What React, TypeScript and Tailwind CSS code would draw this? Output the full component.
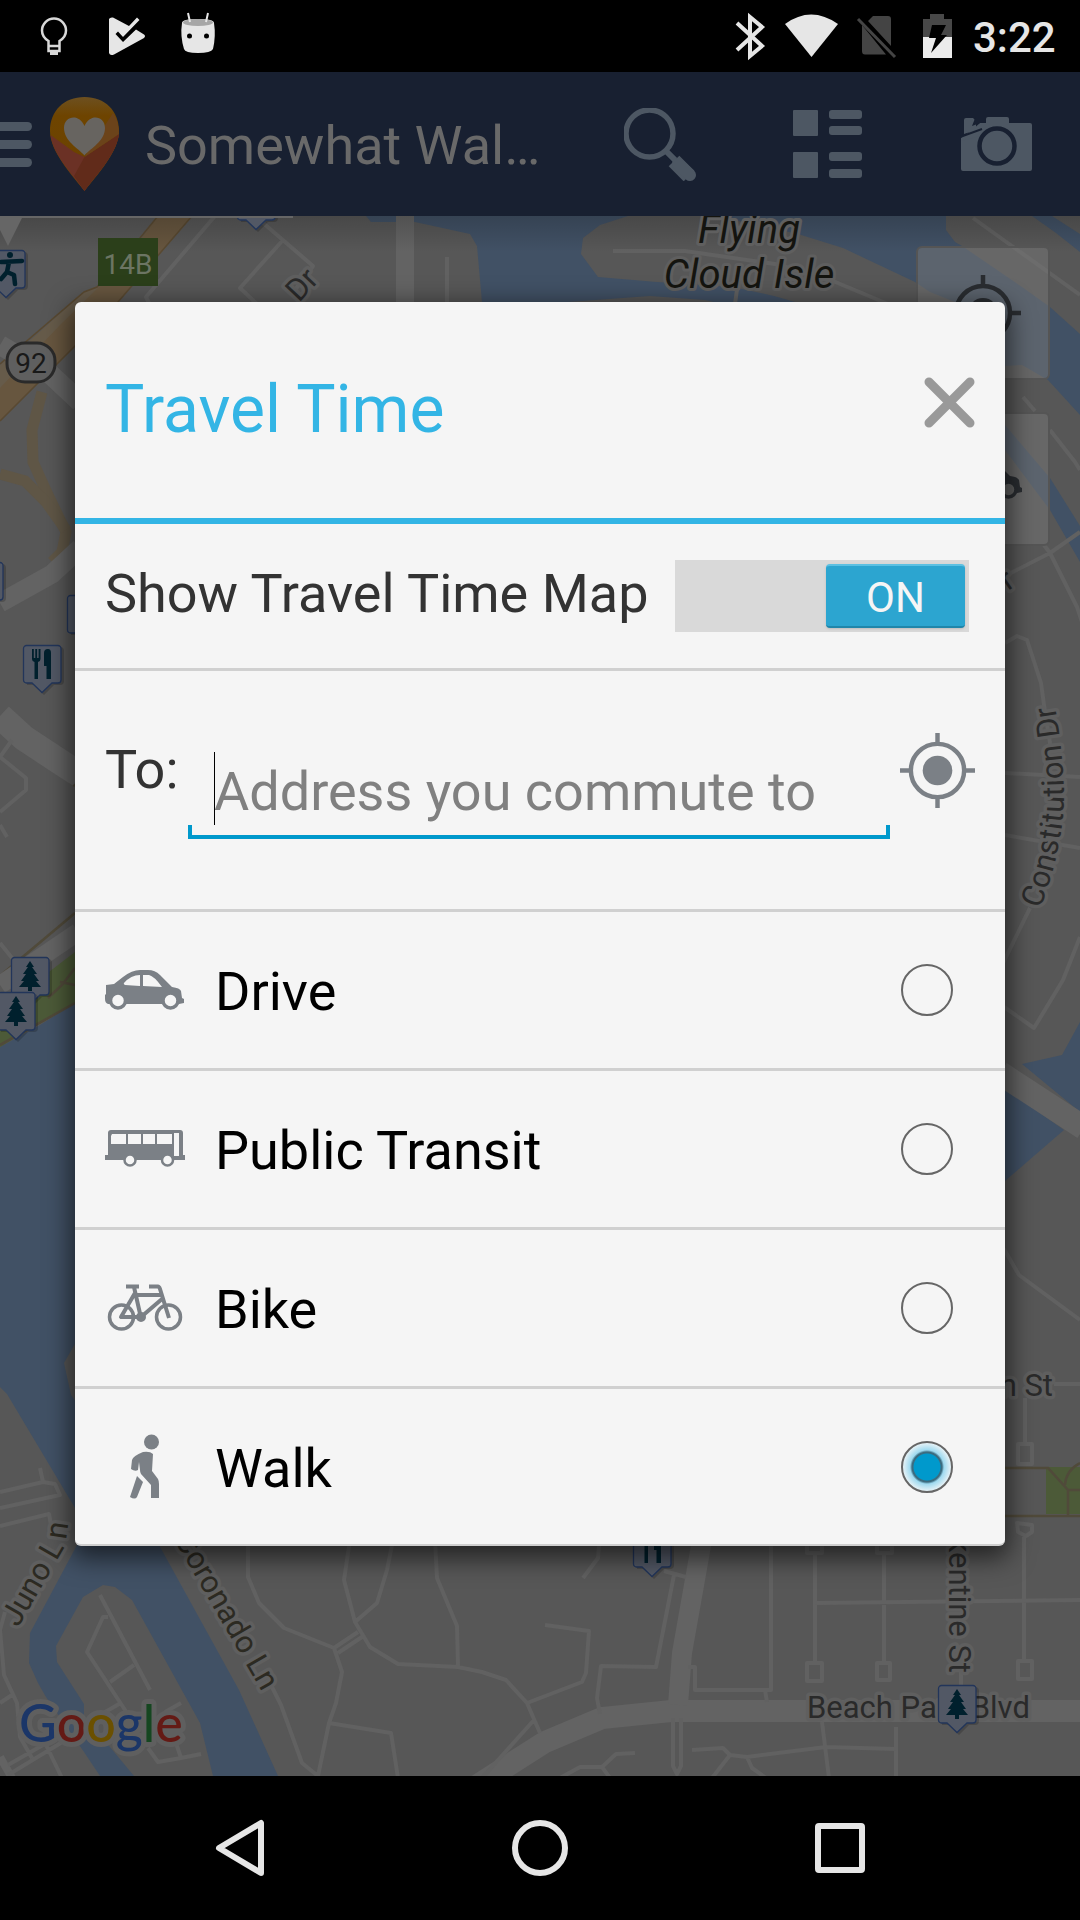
import { useState, type ReactNode } from "react";

const sans = "font-['Roboto','Noto_Sans',sans-serif]";

/* ---------- Map ---------- */

type PinKind = "tree" | "food" | "run" | "none";

function Pin({ x, y, kind }: { x: number; y: number; kind: PinKind }) {
  return (
    <g transform={`translate(${x} ${y})`}>
      <path d="M4 2H37a4 4 0 0 1 4 4V36a4 4 0 0 1-4 4H31L21 50 11 40H4Z" fill="#000" opacity=".18" />
      <path
        d="M3.500 .5H35a3 3 0 0 1 3 3V35a3 3 0 0 1-3 3H29L19 47.500 9 38H3.500a3 3 0 0 1-3-3V3.500a3 3 0 0 1 3-3Z"
        fill="#525865"
        stroke="#22355a"
        strokeWidth="1.300"
      />
      {kind === "tree" && (
        <path d="M19 4l4 6h-2l5 7h-3l5 7h-3l5 6H21v4h-4v-4H8l5-6h-3l5-7h-3l5-7h-2Z" fill="#00202d" />
      )}
      {kind === "food" && (
        <g fill="#00202d">
          <path d="M9 4h1.800v9h1.500V4h1.800v9h1.500V4H17.500v10q0 2.500-2.500 3V34h-3.500V17Q9 16.500 9 14Z" />
          <path d="M21 21V8q0-4 4-4 3 0 3 4V34h-4.500V21Z" />
        </g>
      )}
      {kind === "run" && (
        <g stroke="#00202d" strokeWidth="4.500" fill="none" strokeLinecap="round" strokeLinejoin="round">
          <circle cx="23" cy="5" r="3" fill="#00202d" stroke="none" />
          <path d="M35 11L14 12 M22 12L20 22 27 25 28 34 M20 22L14 29" />
        </g>
      )}
    </g>
  );
}

const thinRoads =
  "M215 216L146 297 150 305 M262 222L313 266 295 290 M283 240L240 288 258 305 M447 257V304 M613 251H685L775 264 833 281 888 304 M735 304L738 282" +
  " M973 218L1080 295 M1023 397L1035 411 M1050 430L1075 462 1080 470 M1080 532L1050 553 1005 576 M1044 545L1050 553 1077 607 1082 622" +
  " M1005 643L1017 636 1027 640 1041 683 1045 712 1050 743 1044 775 M1005 773L1080 777 M1005 835L1080 848 M1030 908L1003 963" +
  " M1080 937L1063 980 1034 1028 1004 1007 M1004 1249L1019 1275 1080 1320 M1004 1384H1012 M1054 1384H1080 M1025 1398V1444H1032V1464H1018V1444H1025" +
  " M1017 1523L1032 1525V1532L1026 1536 1018 1532Z M1024 1537V1661H1018V1679H1032V1661H1024 M815 1603L1080 1600 M815 1553V1663 M884 1553V1663" +
  " M807 1663H822V1681H807Z M877 1663H890V1680H877Z M807 1540H822V1553H807Z M877 1540H892V1553H877Z M771 1545V1690H695V1667H688 M765 1690L767 1702 M961 1672V1690" +
  " M664 1571L686 1577 M674 1575L656 1667 601 1666 597 1698 600 1714 M545 1625L589 1631 586 1673 582 1682 527 1703 M599 1545L598 1558 583 1578" +
  " M673 1718V1766L677 1774 681 1766V1718 M692 1750L723 1748 730 1755 747 1757 826 1747 896 1749 M730 1755L712 1778 M747 1757L752 1768 766 1778" +
  " M822 1722L829 1778 M896 1727V1778 M635 1753L616 1754 602 1767H580L560 1778 M602 1767L610 1778" +
  " M12 740L0 757 26 778V790L0 812 M0 825L7 837 M0 943L12 958 M0 1492L43 1482 55 1484 60 1495 0 1508 M40 1468L43 1482 M0 1526L49 1514 52 1530" +
  " M5 1612L0 1630 4 1675 17 1703 20 1737 32 1758 M0 1703L12 1695 M8 1775L64 1741 M8 1765L50 1741 M46 1745L62 1778" +
  " M100 1595L150 1690 M108 1617H103L87 1652 127 1713 M134 1665L110 1682 M119 1704L100 1715 M148 1748L158 1762 181 1758 201 1754 M176 1743L181 1758 M181 1703L165 1712" +
  " M248 1540V1577L259 1603 284 1628 334 1648 342 1672 336 1703 329 1723 318 1776 302 1763 281 1705 272 1687" +
  " M350 1540L344 1580 355 1622 370 1647 398 1664 458 1667 482 1672 506 1680 527 1703 540 1733 M355 1622L377 1603 387 1570 393 1540 M435 1540L437 1578 457 1626 458 1667 M334 1648L358 1632 M338 1653L362 1637" +
  " M329 1723L391 1733 398 1778 M534 1720L482 1778 M527 1703L540 1698";

const halo = { stroke: "#5f5f5f", strokeWidth: 7, paintOrder: "stroke", strokeLinejoin: "round" } as const;

function CityMap() {
  return (
    <svg
      className={`absolute inset-0 size-full ${sans}`}
      viewBox="0 216 1080 1560"
      preserveAspectRatio="xMidYMid slice"
      aria-label="Map"
    >
      <defs>
        <path id="constitution" d="M1040 909Q1062 852 1064 800 1064 750 1052 690" />
        <linearGradient id="barShadow" x1="0" y1="0" x2="0" y2="1">
          <stop offset="0" stopColor="#000" stopOpacity=".18" />
          <stop offset="1" stopColor="#000" stopOpacity="0" />
        </linearGradient>
      </defs>
      <rect x="0" y="216" width="1080" height="1560" fill="#575757" />

      {/* water */}
      <g fill="#415165">
        <path d="M366 216L371 222H415L470 234 477 246 482 302V366H1005L1022 365 1048 380 1080 415V216Z" />
        <path d="M1005 425L1050 478 1080 526V562L1050 510 1005 450Z" />
        <path d="M1022 1064L1062 1055 1080 1022V1112Z M1005 1088L1064 1130 1005 1181Z" />
        <path d="M0 1047L40 1025 75 1003H160L159 1545 239 1690 278 1776H213L200 1723 132 1600 115 1587 103 1585 83 1597 56 1646 57 1662 84 1704V1715L100 1735 134 1776H100L84 1752 46 1697 38 1683 29 1663 30 1633 77 1545 75 1508 7 1394 0 1387Z" />
      </g>
      {/* islands and shore */}
      <g fill="#575757">
        <path d="M628 216L600 225 583 238 581 254 598 277 657 282 733 287 774 296 802 304H960L930 292 915 282 843 248 798 234 716 216Z" />
        <path d="M554 303L650 296 705 300 722 304Z" />
        <path d="M946 216V230L955 242 962 246 1022 287 1050 307 1080 334V252L1056 233 1032 216Z M1052 216L1080 234V216Z" />
        <path d="M64 1363L76 1342V1402L71 1395Z" />
      </g>
      {/* parks */}
      <path d="M75 952L45 975 0 1023V1047L75 1003Z M1046 1467H1080V1514H1046Z" fill="#4c5a38" />
      <g fill="none" stroke="#504a3a" strokeWidth="2.500">
        <path d="M0 1045L75 1003 M0 976L75 913 M0 730L75 786 M75 968L62 985 48 998 M60 982L75 985" />
        <path d="M1004 1468H1048L1068 1490V1516 M1068 1490H1080 M1065 1485Q1066 1470 1080 1463 M1004 1516H1080" />
      </g>

      {/* highway */}
      <path d="M158 216H192L118 302 76 345 0 421V378L25 350 84 292 100 286 140 240Z" fill="#67563f" />
      <path d="M84 292L100 286 60 325 0 388V365L25 345Z" fill="#665b4a" />
      <path d="M158 216L140 238 97 287 84 292 0 364 M192 216L118 302 76 345 0 421" fill="none" stroke="#594931" strokeWidth="1.500" />
      <g fill="none" stroke="#5f5646" strokeWidth="11">
        <path d="M42 392L32 430 33 462 48 495 66 532 62 552 52 562" />
        <path d="M0 474L25 481 46 502 66 530" />
      </g>

      {/* wide roads */}
      <g fill="none" stroke="#636363">
        <path d="M405 216V304" strokeWidth="18" />
        <path d="M0 345L22 358 M48 372L80 402" strokeWidth="20" />
        <path d="M0 603L52 574 80 548" strokeWidth="19" />
        <path d="M0 716L24 738 80 775" strokeWidth="26" />
        <path d="M0 985L78 932" strokeWidth="18" />
        <path d="M1000 1073L1084 1128" strokeWidth="24" />
        <path d="M470 1790L545 1742 602 1718 671 1711H1080" strokeWidth="22" />
        <path d="M702 1540L682 1653 678 1705" strokeWidth="20" />
        <path d="M0 1757L12 1778" strokeWidth="8" />
      </g>
      <path d={thinRoads} fill="none" stroke="#616161" strokeWidth="4" strokeLinejoin="round" />

      <rect x="0" y="216" width="1080" height="36" fill="url(#barShadow)" />

      {/* info window edge */}
      <Pin x={237} y={182} kind="none" />
      <Pin x={-13} y={250} kind="run" />
      <path d="M0 216H293V218H22L8 246 0 230Z" fill="#666" />

      {/* road shields */}
      <rect x="98" y="238" width="60" height="48" fill="#2b3f1a" />
      <text x="128" y="274" fontSize="28" textAnchor="middle" fill="#6c7563">14B</text>
      <rect x="7" y="343" width="48" height="39" rx="18" fill="#5f5f5f" stroke="#2a2a2a" strokeWidth="3" />
      <text x="31" y="373" fontSize="28" textAnchor="middle" fill="#191919">92</text>

      {/* labels */}
      <g fontSize="31" fill="#2a2a2a" {...halo}>
        <text transform="translate(299 303) rotate(-47)">Dr</text>
        <text transform="translate(1008 591) rotate(-35)">r</text>
        <text x="1053" y="1396" textAnchor="end">n St</text>
        <text><textPath href="#constitution">Constitution Dr</textPath></text>
        <text transform="translate(949 1673) rotate(90)" textAnchor="end">kentine St</text>
        <text x="807" y="1718">Beach Park Blvd</text>
        <g fill="#2c2a22">
          <text transform="translate(18 1628) rotate(-60)">Juno L</text>
          <text transform="translate(66 1540) rotate(-82)">n</text>
          <text transform="translate(262 1692) rotate(60)" textAnchor="end">Coronado Ln</text>
        </g>
      </g>
      <g fontSize="40" fontStyle="italic" textAnchor="middle" fill="#14140f" {...halo} strokeWidth={6}>
        <text x="749" y="243">Flying</text>
        <text x="749" y="288">Cloud Isle</text>
      </g>

      <Pin x={-35} y={562} kind="none" />
      <Pin x={67} y={595} kind="food" />
      <Pin x={23} y={645} kind="food" />
      <Pin x={11} y={957} kind="tree" />
      <Pin x={-3} y={992} kind="tree" />
      <Pin x={633} y={1529} kind="food" />
      <Pin x={938} y={1685} kind="tree" />

      <text x="19" y="1742" fontSize="52" fontWeight="500" className="font-['Lato',sans-serif]" {...halo} strokeWidth={10}>
        <tspan fill="#1b3668">G</tspan>
        <tspan fill="#641a15">o</tspan>
        <tspan fill="#6b5000">o</tspan>
        <tspan fill="#1b3668">g</tspan>
        <tspan fill="#154620">l</tspan>
        <tspan fill="#641a15">e</tspan>
      </text>
    </svg>
  );
}

/* ---------- Shared icons ---------- */

function Crosshair({ className }: { className: string }) {
  return (
    <svg viewBox="0 0 76 76" className={className} fill="none" stroke="currentColor" aria-hidden="true">
      <circle cx="38" cy="38" r="27" strokeWidth="4.500" />
      <circle cx="38" cy="38" r="15" fill="currentColor" stroke="none" />
      <path d="M38 0V11 M38 65V76 M0 38H11 M65 38H76" strokeWidth="4.500" />
    </svg>
  );
}

function CarIcon({ className, hole }: { className: string; hole: string }) {
  return (
    <svg viewBox="105 951 80 78" className={className} aria-hidden="true">
      <path
        d="M105 995L106 994V985L114 984 123 977Q132 970 140 970H148Q155 970 160 975L172 987Q180 988 181 991L182 998 184 999V1003L179 1004H108Q105 1003 105 999Z"
        fill="currentColor"
      />
      <g fill={hole}>
        <path d="M124 983Q131 975 140 975V986L125 985Q123 984 124 983Z M143 975H149Q154 976 162 987L143 986Z" />
      </g>
      <g fill={hole} stroke="currentColor" strokeWidth="3.500">
        <circle cx="118" cy="1000.500" r="7.500" />
        <circle cx="170.500" cy="1000.500" r="7.500" />
      </g>
    </svg>
  );
}

function BusIcon() {
  return (
    <svg viewBox="105 1110 80 78" className="w-20 shrink-0" aria-hidden="true">
      <path d="M108 1155V1133Q108 1130 111 1130H180Q183 1130 183 1133V1155H185V1160H105V1155Z" fill="currentColor" />
      <path d="M112 1134H126V1144H111V1136Z M128 1134H141V1144H128Z M143 1134H155V1144H143Z M157 1134H172V1144H157Z M174 1133H179V1156H174Z" fill="#f5f5f5" />
      <g fill="#f5f5f5" stroke="currentColor" strokeWidth="2.500">
        <circle cx="130" cy="1160" r="5.500" />
        <circle cx="167.500" cy="1160" r="5.500" />
      </g>
    </svg>
  );
}

function BikeIcon() {
  return (
    <svg viewBox="105 1269 80 78" className="w-20 shrink-0" fill="none" stroke="currentColor" strokeWidth="4" aria-hidden="true">
      <circle cx="121.500" cy="1317" r="12" strokeWidth="3.500" />
      <circle cx="168.500" cy="1317" r="12" strokeWidth="3.500" />
      <path d="M126 1286.500H139 M134 1287L141 1318 M135 1293L121 1317H141L162 1299 M134 1295H161 M149 1286.500H158Q159 1286.500 160 1289L169 1318" strokeLinejoin="round" />
      <circle cx="141" cy="1317" r="3" fill="currentColor" />
    </svg>
  );
}

function WalkIcon() {
  return (
    <svg viewBox="105 1428 80 78" className="w-20 shrink-0" fill="currentColor" aria-hidden="true">
      <circle cx="151.500" cy="1442" r="7.500" />
      <path d="M143 1452Q150 1451 153 1454L152 1471 158 1479Q159 1481 159 1484V1498H151V1485L141 1474Q140 1472 140 1470L139 1462 138 1470Q135 1472 131 1469L132 1460Q133 1456 143 1452Z" />
      <path d="M137 1476L143 1482 137 1497Q135 1500 130 1497Z" />
    </svg>
  );
}

/* ---------- Bars ---------- */

function StatusBar() {
  return (
    <div className="flex h-[72px] items-center bg-black pl-[18px] pr-6">
      <svg viewBox="18 0 216 72" className="w-[216px]" aria-hidden="true">
        <g fill="none" stroke="#d8d8d8" strokeWidth="2.500">
          <path d="M48.500 46V41Q42 37 42 30.500A12 12 0 0 1 66 30.500Q66 37 59.500 41V51H48.500Z M48.500 46H59.500" />
          <path d="M50 53.500H58" strokeWidth="3" />
        </g>
        <path d="M109 19Q110 17 113 17.500L129 26 137 17.500 139.500 20 123 37 118 31.500 115.500 34 123 42 136 29.500 144 34.500Q146 36 144 38L114 54.500Q110 56 109 53Z" fill="#e6e6e6" />
        <path d="M182 23Q182 19 198 19T214 23Q216 36 213 49Q211 53 198 53T184 49Q180 36 182 23Z" fill="#e6e6e6" />
        <ellipse cx="198" cy="22.500" rx="15" ry="3.500" fill="#a6a6a6" />
        <path d="M188 13L190 22 M208 13L206 22" stroke="#e6e6e6" strokeWidth="2" />
        <circle cx="189.500" cy="36" r="2.500" />
        <circle cx="206.500" cy="36" r="2.500" />
      </svg>
      <svg viewBox="714 0 256 72" className="ml-auto w-64" aria-hidden="true">
        <path d="M737 23L762 46 750 56V17L762 27 737 50" fill="none" stroke="#e6e6e6" strokeWidth="4" />
        <path d="M785 24Q811 5 838 24L811.500 57Z" fill="#e6e6e6" />
        <path d="M868 21L873 16H888Q891 16 891 19V46Z M862 25L886 54.500H865Q862 54.500 862 51Z" fill="#444" />
        <path d="M858 19L895 57" stroke="#444" strokeWidth="3" />
        <path d="M923 19H930V14H944V19H952V37H923Z" fill="#484848" />
        <path d="M923 37H952V58H923Z" fill="#ebebeb" />
        <path d="M932 25H946L941 35H947L931 53 936 38H929Z" fill="#000" />
      </svg>
      <span className="ml-[3px] w-[83px] pt-[3px] text-[42px] font-medium leading-none text-[#e6e6e6]">3:22</span>
    </div>
  );
}

function AppBar() {
  const action = "flex h-full w-[168px] shrink-0 items-center justify-center";
  return (
    <header className="flex h-36 items-center bg-[#182031] text-[#4d5763]">
      <button aria-label="Open menu" className="flex w-8 shrink-0 flex-col gap-[9px]">
        <span className="h-[9px] rounded-r-full bg-current" />
        <span className="h-[9px] rounded-r-full bg-current" />
        <span className="h-[9px] rounded-r-full bg-current" />
      </button>
      <svg viewBox="50 97 69 94" className="ml-[18px] w-[69px] shrink-0" aria-hidden="true">
        <defs>
          <linearGradient id="pinTop" x1="0" y1="0" x2="0" y2="1">
            <stop offset="0" stopColor="#6d5020" />
            <stop offset=".2" stopColor="#6e4400" />
            <stop offset="1" stopColor="#6a4200" />
          </linearGradient>
        </defs>
        <path d="M84.500 97C105 97 119 111 119 131 119 152 96 176 84.500 191 73 176 50 152 50 131 50 111 64 97 84.500 97Z" fill="url(#pinTop)" />
        <path d="M50.500 135L74 152 84.500 157 96 152 119 134C116 155 96 175 84.500 191 73 175 53 155 50.500 135Z" fill="#6b3125" />
        <path d="M119 134C116 155 96 175 84.500 191L74 176 84.500 157Z" fill="#612b1a" />
        <path d="M113 113Q119 121 119 134L84.500 157Z" fill="#6b431a" />
        <path d="M84.500 155.500C78 148 64 141 64 128 64 116 79 113 84.500 126 90 113 105 116 105 128 105 141 91 148 84.500 155.500Z" fill="#676460" />
      </svg>
      <h1 className="ml-[26px] min-w-0 flex-1 truncate pt-1 text-[54px] leading-[64px] text-[#696969]">Somewhat Wal…</h1>
      <button aria-label="Search" className={action}>
        <svg viewBox="624 108 72 73" className="w-[72px]" fill="none" stroke="currentColor" aria-hidden="true">
          <circle cx="649.500" cy="133.500" r="23.500" strokeWidth="5.500" />
          <path d="M666 151L675 160" strokeWidth="6" />
          <path d="M674 161L689 176" strokeWidth="15" strokeLinejoin="round" />
          <path d="M678 164L690 175" strokeWidth="12" strokeLinecap="round" />
        </svg>
      </button>
      <button aria-label="List view" className={action}>
        <svg viewBox="794 111 70 68" className="w-[70px]" fill="currentColor" aria-hidden="true">
          <rect x="794" y="111" width="25" height="26" rx="1" />
          <rect x="794" y="153" width="25" height="26" rx="1" />
          <rect x="830" y="111" width="33" height="9" rx="3" />
          <rect x="830" y="127" width="33" height="9" rx="3" />
          <rect x="830" y="153" width="33" height="9" rx="3" />
          <rect x="830" y="170" width="33" height="9" rx="3" />
        </svg>
      </button>
      <button aria-label="Take photo" className={action}>
        <svg viewBox="960 117 72 54" className="w-[72px]" aria-hidden="true">
          <path d="M961 139L982 132H986V119Q986 117 988 117H1007Q1009 117 1009 119V123H1030Q1032 123 1032 125V169Q1032 171 1030 171H963Q961 171 961 169Z" fill="currentColor" />
          <path d="M961 138L972 130 980 123H988V134L961 141Z" fill="currentColor" />
          <path d="M964 134V120Q964 118 966 118H973L976 121V130Z" fill="currentColor" />
          <path d="M960 137L982 129" stroke="#182031" strokeWidth="2" />
          <path d="M976 116H985V123H980L972 126Z" fill="#182031" />
          <circle cx="997" cy="146" r="17.500" fill="none" stroke="#182031" strokeWidth="4.500" />
        </svg>
      </button>
    </header>
  );
}

function NavBar() {
  const slot = "flex h-full flex-1 items-center justify-center";
  return (
    <nav className="flex h-36 bg-black px-[90px]">
      <button aria-label="Back" className={slot}>
        <svg viewBox="212 1818 56 60" className="w-14" fill="none" stroke="#e6e6e6" strokeWidth="6" strokeLinejoin="round" aria-hidden="true">
          <path d="M261 1823V1873L219 1848Z" />
        </svg>
      </button>
      <button aria-label="Home" className={slot}>
        <span className="size-14 rounded-full border-[6px] border-[#e6e6e6]" />
      </button>
      <button aria-label="Recent apps" className={slot}>
        <span className="size-[50px] rounded border-[6px] border-[#e6e6e6]" />
      </button>
    </nav>
  );
}

/* ---------- Dialog ---------- */

const modes: { id: string; icon: ReactNode }[] = [
  { id: "Drive", icon: <CarIcon className="w-20 shrink-0" hole="#f5f5f5" /> },
  { id: "Public Transit", icon: <BusIcon /> },
  { id: "Bike", icon: <BikeIcon /> },
  { id: "Walk", icon: <WalkIcon /> },
];

function TravelDialog() {
  const [mode, setMode] = useState("Walk");
  const [on, setOn] = useState(true);
  return (
    <section
      role="dialog"
      aria-labelledby="dialog-title"
      className="w-full overflow-hidden rounded-md border-b-2 border-[#cfcfcf] bg-[#f5f5f5] text-[54px] leading-[64px] text-[#333] shadow-[0_8px_26px_4px_rgba(0,0,0,0.6)]"
    >
      <div className="flex h-[222px] items-center justify-between border-b-[6px] border-[#33b5e5] px-[30px]">
        <h2 id="dialog-title" className="text-[66px] leading-[78px] text-[#33b5e5]">Travel Time</h2>
        <button aria-label="Close" className="pb-4">
          <svg viewBox="0 0 51 51" className="w-[51px]" stroke="#999" strokeWidth="9" strokeLinecap="round" aria-hidden="true">
            <path d="M5 5L46 46 M46 5L5 46" />
          </svg>
        </button>
      </div>

      <label className="relative flex h-36 cursor-pointer items-center justify-between pl-[30px] pr-9">
        <span className="pb-1">Show Travel Time Map</span>
        <input type="checkbox" role="switch" className="peer sr-only" checked={on} onChange={(e) => setOn(e.target.checked)} />
        <span className="flex h-[72px] w-[294px] justify-start bg-[#d9d9d9] p-1 peer-checked:justify-end">
          <span className="flex h-16 w-[139px] items-center justify-center rounded border-b-2 border-t-2 border-b-[#1f86aa] border-t-[#5cc0e2] bg-[#2ca5d0] pt-1 text-[42px] leading-none text-[#f5f5f5] shadow-sm">
            {on ? "ON" : "OFF"}
          </span>
        </span>
      </label>

      <div className="flex h-[241px] items-center border-t-[3px] border-[#d0d0d0] px-[30px] pb-10">
        <label htmlFor="address" className="w-[83px] shrink-0">To:</label>
        <div className="relative min-w-0 flex-1">
          <input
            id="address"
            type="text"
            placeholder="Address you commute to"
            className="block h-[138px] w-full bg-transparent pb-[11px] pl-[26px] pt-[54px] text-[#333] outline-none placeholder:text-[#808080]"
          />
          <span className="pointer-events-none absolute bottom-[14px] left-[26px] h-[73px] w-px bg-black" />
          <span className="pointer-events-none absolute inset-x-0 bottom-0 h-[14px] border-x-4 border-b-4 border-[#0099cc]" />
        </div>
        <button aria-label="Use current location" className="ml-[10px] shrink-0 text-[#7b8086]">
          <Crosshair className="w-[75px]" />
        </button>
      </div>

      {modes.map(({ id, icon }) => (
        <label key={id} className="flex h-[159px] cursor-pointer items-center border-t-[3px] border-[#d0d0d0] pl-[30px] pr-[52px] text-[#7b8086] last:h-[158px]">
          {icon}
          <span className="ml-[30px] flex-1 pt-1 text-black">{id}</span>
          <input
            type="radio"
            name="mode"
            checked={mode === id}
            onChange={() => setMode(id)}
            className="size-[52px] shrink-0 appearance-none rounded-full border-2 border-[#666] checked:bg-[radial-gradient(circle,#0099cc_13px,#3b6c80_14px,#3b6c80_15px,#9fdaf0_17px,#f0f5f7_25px)]"
          />
        </label>
      ))}
    </section>
  );
}

export default function App() {
  const mapButton = "flex size-[134px] items-center justify-center rounded-md border-2 border-[#555] bg-[#787878]/50 text-[#2a2d31]";
  return (
    <div className={`flex min-h-screen flex-col bg-black ${sans}`}>
      <StatusBar />
      <div className="grid flex-1">
        <div className="col-start-1 row-start-1 flex flex-col">
          <AppBar />
          <main className="relative flex-1 overflow-hidden">
            <CityMap />
            <div className="absolute right-[30px] top-[30px] flex flex-col gap-8">
              <button aria-label="My location" className={mapButton}>
                <Crosshair className="w-[76px]" />
              </button>
              <button aria-label="Commute" className={mapButton}>
                <CarIcon className="w-20" hole="#5f5f5f" />
              </button>
            </div>
          </main>
        </div>
        <div className="z-10 col-start-1 row-start-1 flex items-center px-[75px]">
          <TravelDialog />
        </div>
      </div>
      <NavBar />
    </div>
  );
}
